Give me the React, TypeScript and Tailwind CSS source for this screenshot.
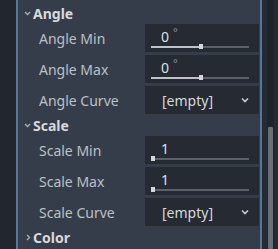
import React from "react";

type Row =
	| { kind: "range"; label: string; value: string; unit?: string; ratio: number }
	| { kind: "curve"; label: string };

const groups: { title: string; open: boolean; rows: Row[] }[] = [
	{
		title: "Angle",
		open: true,
		rows: [
			{ kind: "range", label: "Angle Min", value: "0", unit: "°", ratio: 0.5 },
			{ kind: "range", label: "Angle Max", value: "0", unit: "°", ratio: 0.5 },
			{ kind: "curve", label: "Angle Curve" },
		],
	},
	{
		title: "Scale",
		open: true,
		rows: [
			{ kind: "range", label: "Scale Min", value: "1", ratio: 0 },
			{ kind: "range", label: "Scale Max", value: "1", ratio: 0 },
			{ kind: "curve", label: "Scale Curve" },
		],
	},
	{ title: "Color", open: false, rows: [] },
];

function Chevron({ open }: { open: boolean }) {
	return open ? (
		<svg width="7" height="5" viewBox="0 0 7 5" className="text-[#a7acb4]">
			<path d="M1 1 L3.5 3.5 L6 1" fill="none" stroke="currentColor" strokeWidth="1.4" />
		</svg>
	) : (
		<svg width="5" height="7" viewBox="0 0 5 7" className="text-[#a7acb4]">
			<path d="M1 1 L3.5 3.5 L1 6" fill="none" stroke="currentColor" strokeWidth="1.4" />
		</svg>
	);
}

function RangeField({ value, unit, ratio }: { value: string; unit?: string; ratio: number }) {
	return (
		<div className="relative h-full w-full">
			<div className="flex h-[25px] items-center pl-[16px]">
				<span className="text-[14px] text-[#dfe1e4]">{value}</span>
				{unit && <span className="mb-[8px] ml-[4px] text-[11px] text-[#8d939c]">{unit}</span>}
			</div>
			<div className="absolute top-[22px] left-[6px] h-[2px] w-[98px] bg-[#5b616b]">
				<div className="h-full bg-[#bfc3c8]" style={{ width: `${ratio * 98}px` }} />
				<div
					className="absolute top-[-2px] h-[5px] w-[4px] bg-[#d3d6da]"
					style={{ left: `${ratio * 98 - (ratio > 0 ? 1 : 0)}px` }}
				/>
			</div>
		</div>
	);
}

function CurveField() {
	return (
		<div className="flex h-full items-center justify-between pr-[10px] pl-[17px]">
			<span className="text-[14px] text-[#d6d8dc]">[empty]</span>
			<svg width="8" height="6" viewBox="0 0 8 6" className="text-[#c9ccd1]">
				<path d="M1 1.5 L4 4.5 L7 1.5" fill="none" stroke="currentColor" strokeWidth="1.6" />
			</svg>
		</div>
	);
}

export default function App() {
	return (
		<div
			className="flex h-[249px] w-[278px] overflow-hidden bg-[#363d4a]"
			style={{ fontFamily: '"Noto Sans", "Open Sans", sans-serif' }}
		>
			<div className="w-[16px] shrink-0 bg-[#22272f]" />
			<div className="w-[2px] shrink-0 bg-[#54769f]" />
			<div className="flex w-[242px] shrink-0 flex-col pt-[2px]">
				{groups.map((group) => (
					<div key={group.title} className="flex flex-col">
						<div className="flex h-[22px] items-center">
							<div className="flex w-[15px] justify-end pr-[2px]">
								<Chevron open={group.open} />
							</div>
							<span className="text-[14px] font-bold text-[#d7d9dd]">{group.title}</span>
						</div>
						<div className="flex flex-col gap-[3px]">
							{group.rows.map((row) => (
								<div key={row.label} className="flex h-[28px] items-center">
									<div className="w-[127px] pl-[21px] text-[14px] text-[#bcc0c6]">{row.label}</div>
									<div className="h-[28px] w-[114px] bg-[#252a33]">
										{row.kind === "range" ? (
											<RangeField value={row.value} unit={row.unit} ratio={row.ratio} />
										) : (
											<CurveField />
										)}
									</div>
								</div>
							))}
						</div>
					</div>
				))}
			</div>
			<div className="w-[2px] shrink-0 bg-[#54769f]" />
			<div className="flex w-[16px] shrink-0 justify-center bg-[#262b33]">
				<div className="mr-[-1px] flex w-[7px] flex-col bg-[#1f232a] px-[1px]">
					<div className="h-[127px]" />
					<div className="flex-1 rounded-[1px] bg-[#6a6f78]" />
				</div>
			</div>
		</div>
	);
}
